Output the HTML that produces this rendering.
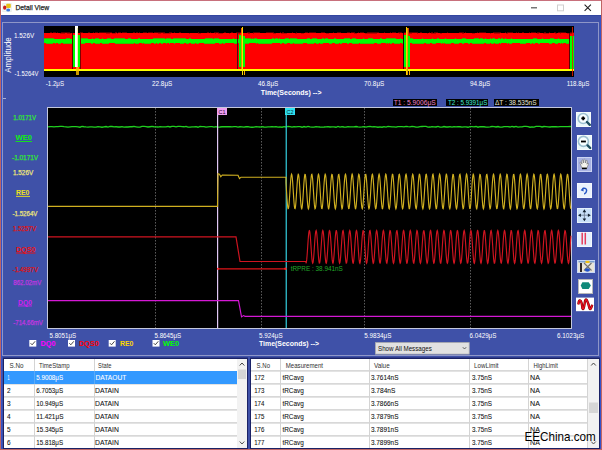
<!DOCTYPE html><html><head><meta charset="utf-8"><style>html,body{margin:0;padding:0;width:602px;height:450px;overflow:hidden;background:#3f51a8}</style></head><body><svg width="602" height="450" viewBox="0 0 602 450" style="position:absolute;left:0;top:0;font-family:'Liberation Sans',sans-serif" shape-rendering="auto">
<rect x="0" y="0" width="602" height="450" fill="#3f51a8" />
<rect x="1" y="1" width="600" height="14" fill="#ffffff" />
<rect x="1" y="15" width="600" height="1" fill="#3346a0" />
<rect x="0" y="0" width="602" height="1" fill="#c8707c" />
<rect x="0" y="449" width="602" height="1" fill="#c06868" />
<rect x="0" y="0" width="1" height="450" fill="#bf6464" />
<rect x="601" y="0" width="1" height="450" fill="#bf6464" />
<rect x="1" y="16" width="1" height="433" fill="#3552c8" />
<rect x="600" y="16" width="1" height="433" fill="#3552c8" />
<rect x="2.8" y="3.4" width="8.4" height="8.4" fill="#f4f8f4" stroke="#dde4dd" stroke-width="0.5"/>
<ellipse cx="8.2" cy="9.9" rx="2" ry="1.5" fill="#3a78e0"/>
<rect x="6.2" y="3.8" width="4.6" height="4.1" rx="1" fill="#e8c018"/>
<ellipse cx="4.7" cy="7.7" rx="1.7" ry="2.1" fill="#c82020"/>
<text x="15.40" y="10.2" font-size="7.6" fill="#222" font-weight="normal" textLength="33.67" lengthAdjust="spacingAndGlyphs" stroke="#222" stroke-width="0.25">Detail View</text>
<rect x="531" y="7.2" width="6" height="1.2" fill="#555" />
<rect x="557.5" y="5" width="6" height="5.8" fill="none" stroke="#cfcfcf" stroke-width="1"/>
<path d="M584.6 4.6 L590.9 10.9 M590.9 4.6 L584.6 10.9" stroke="#222" stroke-width="1.1"/>
<rect x="2" y="22" width="597" height="1" fill="#8e96c8" />
<rect x="2" y="22" width="1" height="334" fill="#8e96c8" />
<rect x="598" y="22" width="1" height="334" fill="#8e96c8" />
<rect x="2" y="355" width="597" height="1" fill="#8e96c8" />
<rect x="3" y="98" width="3" height="1" fill="#a8b0d8" />
<rect x="44" y="26" width="530" height="51" fill="#000" />
<rect x="44" y="33" width="530" height="36" fill="#ff0000" />
<path d="M50 32h2v1h-2zM53 32h3v1h-3zM57 32h1v1h-1zM61 32h9v1h-9zM75 32h1v1h-1zM80 32h3v1h-3zM88 32h2v1h-2zM93 32h1v1h-1zM95 32h3v1h-3zM99 32h4v1h-4zM103 32h4v1h-4zM107 32h1v1h-1zM108 32h4v1h-4zM115 32h2v1h-2zM118 32h1v1h-1zM119 32h2v1h-2zM122 32h5v1h-5zM133 32h2v1h-2zM136 32h2v1h-2zM139 32h1v1h-1zM143 32h2v1h-2zM145 32h1v1h-1zM146 32h1v1h-1zM148 32h2v1h-2zM150 32h3v1h-3zM154 32h1v1h-1zM155 32h10v1h-10zM169 32h3v1h-3zM174 32h1v1h-1zM179 32h2v1h-2zM198 32h1v1h-1zM207 32h1v1h-1zM208 32h1v1h-1zM210 32h1v1h-1zM214 32h3v1h-3zM217 32h2v1h-2zM224 32h2v1h-2zM231 32h2v1h-2zM236 32h6v1h-6zM247 32h2v1h-2zM249 32h1v1h-1zM253 32h4v1h-4zM257 32h3v1h-3zM266 32h5v1h-5zM271 32h3v1h-3zM280 32h1v1h-1zM282 32h2v1h-2zM292 32h1v1h-1zM296 32h1v1h-1zM305 32h3v1h-3zM309 32h1v1h-1zM310 32h1v1h-1zM311 32h2v1h-2zM313 32h3v1h-3zM321 32h4v1h-4zM333 32h1v1h-1zM337 32h3v1h-3zM340 32h1v1h-1zM347 32h3v1h-3zM351 32h4v1h-4zM358 32h1v1h-1zM360 32h1v1h-1zM361 32h3v1h-3zM367 32h1v1h-1zM368 32h11v1h-11zM384 32h1v1h-1zM390 32h1v1h-1zM392 32h2v1h-2zM394 32h2v1h-2zM398 32h2v1h-2zM400 32h2v1h-2zM404 32h2v1h-2zM408 32h10v1h-10zM420 32h2v1h-2zM429 32h1v1h-1zM431 32h2v1h-2zM434 32h4v1h-4zM447 32h1v1h-1zM459 32h5v1h-5zM465 32h1v1h-1zM477 32h1v1h-1zM479 32h7v1h-7zM493 32h2v1h-2zM495 32h1v1h-1zM496 32h4v1h-4zM500 32h1v1h-1zM505 32h1v1h-1zM507 32h1v1h-1zM508 32h5v1h-5zM516 32h1v1h-1zM518 32h1v1h-1zM522 32h2v1h-2zM529 32h1v1h-1zM531 32h5v1h-5zM537 32h3v1h-3zM544 32h2v1h-2zM549 32h1v1h-1zM554 32h2v1h-2zM558 32h4v1h-4zM562 32h4v1h-4zM570 32h2v1h-2zM573 32h1v1h-1z" fill="#ff0000" opacity="0.35" shape-rendering="crispEdges"/>
<path d="M60 33h1v1h-1zM61 33h4v1h-4zM67 33h2v1h-2zM69 33h2v1h-2zM106 33h4v1h-4zM112 33h2v1h-2zM114 33h2v1h-2zM117 33h1v1h-1zM158 33h3v1h-3zM163 33h3v1h-3zM166 33h5v1h-5zM189 33h1v1h-1zM198 33h3v1h-3zM215 33h1v1h-1zM218 33h2v1h-2zM220 33h3v1h-3zM229 33h1v1h-1zM237 33h3v1h-3zM248 33h2v1h-2zM253 33h1v1h-1zM273 33h3v1h-3zM281 33h6v1h-6zM295 33h2v1h-2zM301 33h3v1h-3zM326 33h3v1h-3zM354 33h3v1h-3zM365 33h11v1h-11zM376 33h1v1h-1zM399 33h1v1h-1zM406 33h6v1h-6zM417 33h1v1h-1zM427 33h1v1h-1zM431 33h5v1h-5zM440 33h2v1h-2zM462 33h2v1h-2zM472 33h3v1h-3zM490 33h1v1h-1zM494 33h4v1h-4zM498 33h2v1h-2zM506 33h2v1h-2zM537 33h2v1h-2zM543 33h5v1h-5zM548 33h1v1h-1zM555 33h2v1h-2zM560 33h1v1h-1zM567 33h4v1h-4zM571 33h2v1h-2z" fill="#000000" opacity="0.25" shape-rendering="crispEdges"/>
<rect x="44" y="39" width="530" height="4" fill="#00ff00" />
<path d="M44 38h2v1h-2zM46 38h2v1h-2zM48 38h6v1h-6zM66 38h2v1h-2zM68 38h2v1h-2zM80 38h8v1h-8zM92 38h1v1h-1zM95 38h4v1h-4zM102 38h1v1h-1zM107 38h4v1h-4zM114 38h11v1h-11zM128 38h3v1h-3zM138 38h2v1h-2zM153 38h12v1h-12zM166 38h5v1h-5zM173 38h13v1h-13zM189 38h2v1h-2zM205 38h5v1h-5zM210 38h3v1h-3zM214 38h5v1h-5zM233 38h1v1h-1zM243 38h6v1h-6zM249 38h2v1h-2zM252 38h1v1h-1zM254 38h3v1h-3zM272 38h2v1h-2zM275 38h3v1h-3zM279 38h1v1h-1zM285 38h1v1h-1zM286 38h3v1h-3zM290 38h7v1h-7zM307 38h3v1h-3zM312 38h5v1h-5zM322 38h2v1h-2zM325 38h3v1h-3zM334 38h2v1h-2zM344 38h6v1h-6zM352 38h2v1h-2zM354 38h2v1h-2zM363 38h1v1h-1zM368 38h5v1h-5zM380 38h2v1h-2zM386 38h10v1h-10zM400 38h1v1h-1zM406 38h2v1h-2zM410 38h2v1h-2zM412 38h1v1h-1zM422 38h1v1h-1zM432 38h1v1h-1zM437 38h2v1h-2zM445 38h1v1h-1zM455 38h1v1h-1zM462 38h2v1h-2zM464 38h2v1h-2zM474 38h5v1h-5zM480 38h3v1h-3zM485 38h1v1h-1zM490 38h1v1h-1zM492 38h3v1h-3zM498 38h2v1h-2zM501 38h2v1h-2zM505 38h1v1h-1zM511 38h1v1h-1zM533 38h4v1h-4zM542 38h1v1h-1zM550 38h1v1h-1zM551 38h3v1h-3zM558 38h1v1h-1zM573 38h1v1h-1z" fill="#00f000" opacity="0.7" shape-rendering="crispEdges"/>
<path d="M46 43h1v1h-1zM47 43h4v1h-4zM51 43h2v1h-2zM55 43h1v1h-1zM58 43h3v1h-3zM63 43h5v1h-5zM68 43h8v1h-8zM76 43h7v1h-7zM83 43h1v1h-1zM84 43h1v1h-1zM91 43h2v1h-2zM95 43h5v1h-5zM102 43h5v1h-5zM107 43h2v1h-2zM115 43h1v1h-1zM116 43h8v1h-8zM124 43h10v1h-10zM135 43h2v1h-2zM137 43h2v1h-2zM142 43h1v1h-1zM144 43h3v1h-3zM147 43h4v1h-4zM154 43h1v1h-1zM155 43h1v1h-1zM157 43h2v1h-2zM161 43h1v1h-1zM162 43h1v1h-1zM166 43h1v1h-1zM169 43h1v1h-1zM174 43h1v1h-1zM180 43h2v1h-2zM182 43h2v1h-2zM186 43h3v1h-3zM191 43h3v1h-3zM194 43h1v1h-1zM196 43h3v1h-3zM204 43h1v1h-1zM205 43h10v1h-10zM219 43h1v1h-1zM220 43h2v1h-2zM223 43h2v1h-2zM234 43h1v1h-1zM235 43h2v1h-2zM237 43h1v1h-1zM240 43h2v1h-2zM244 43h1v1h-1zM245 43h3v1h-3zM248 43h1v1h-1zM256 43h1v1h-1zM258 43h13v1h-13zM271 43h1v1h-1zM280 43h2v1h-2zM284 43h3v1h-3zM290 43h2v1h-2zM292 43h1v1h-1zM294 43h1v1h-1zM295 43h3v1h-3zM298 43h1v1h-1zM299 43h1v1h-1zM300 43h3v1h-3zM307 43h7v1h-7zM316 43h3v1h-3zM320 43h3v1h-3zM329 43h3v1h-3zM335 43h2v1h-2zM337 43h2v1h-2zM340 43h2v1h-2zM347 43h2v1h-2zM352 43h3v1h-3zM355 43h4v1h-4zM360 43h1v1h-1zM361 43h4v1h-4zM365 43h2v1h-2zM367 43h3v1h-3zM370 43h4v1h-4zM377 43h1v1h-1zM378 43h3v1h-3zM386 43h1v1h-1zM388 43h1v1h-1zM390 43h2v1h-2zM394 43h4v1h-4zM398 43h2v1h-2zM402 43h1v1h-1zM403 43h1v1h-1zM405 43h2v1h-2zM412 43h2v1h-2zM414 43h10v1h-10zM426 43h4v1h-4zM432 43h4v1h-4zM441 43h1v1h-1zM443 43h1v1h-1zM445 43h3v1h-3zM448 43h3v1h-3zM454 43h5v1h-5zM462 43h2v1h-2zM468 43h1v1h-1zM469 43h1v1h-1zM472 43h2v1h-2zM474 43h2v1h-2zM476 43h3v1h-3zM479 43h2v1h-2zM481 43h3v1h-3zM486 43h4v1h-4zM491 43h3v1h-3zM495 43h3v1h-3zM498 43h1v1h-1zM500 43h1v1h-1zM507 43h1v1h-1zM509 43h3v1h-3zM520 43h1v1h-1zM521 43h2v1h-2zM523 43h3v1h-3zM530 43h1v1h-1zM531 43h1v1h-1zM533 43h2v1h-2zM538 43h1v1h-1zM539 43h1v1h-1zM549 43h2v1h-2zM551 43h1v1h-1zM555 43h3v1h-3zM560 43h1v1h-1zM562 43h1v1h-1zM566 43h5v1h-5z" fill="#00f000" opacity="0.8" shape-rendering="crispEdges"/>
<rect x="44" y="69" width="530" height="2" fill="#ffff00" />
<rect x="72" y="33" width="1" height="36" fill="#600000" />
<rect x="73" y="35" width="2" height="32" fill="#00ff00" />
<rect x="75" y="26" width="3" height="41" fill="#ffffff" />
<rect x="77" y="28" width="1" height="39" fill="#f0f0a0" />
<rect x="78" y="35" width="2" height="32" fill="#00ff00" />
<rect x="80" y="33" width="1" height="36" fill="#800000" />
<rect x="76" y="67" width="3" height="8" fill="#ffc000" opacity="0.8"/>
<rect x="237" y="33" width="1" height="36" fill="#401020" />
<rect x="239" y="35" width="2" height="32" fill="#00ff00" />
<rect x="241" y="33" width="1" height="36" fill="#c8a000" />
<rect x="242" y="27" width="1" height="48" fill="#ffe000" />
<rect x="243" y="36" width="2" height="31" fill="#00ff00" />
<rect x="241" y="28" width="1" height="8" fill="#ff6000" />
<rect x="244" y="71" width="1" height="4" fill="#ffb000" />
<rect x="403" y="33" width="1" height="36" fill="#300010" />
<rect x="404" y="35" width="2" height="32" fill="#00ff00" />
<rect x="406" y="27" width="1" height="48" fill="#ffd000" />
<rect x="407" y="28" width="1" height="47" fill="#e0a000" />
<rect x="408" y="36" width="2" height="31" fill="#00ff00" />
<rect x="408" y="28" width="1" height="8" fill="#d04000" />
<rect x="409" y="71" width="1" height="4" fill="#ffb000" />
<rect x="569" y="33" width="1" height="36" fill="#600000" />
<rect x="570" y="36" width="4" height="33" fill="#00ff00" />
<rect x="572" y="27" width="1" height="49" fill="#e81800" opacity="0.85"/>
<text x="14.00" y="38.2" font-size="7" fill="#fff" font-weight="normal" textLength="20.17" lengthAdjust="spacingAndGlyphs" >1.526V</text>
<text x="14.50" y="76" font-size="7" fill="#fff" font-weight="normal" textLength="24.01" lengthAdjust="spacingAndGlyphs" >-1.5264V</text>
<text x="0" y="0" font-size="9.6" fill="#fff" textLength="35.6" lengthAdjust="spacingAndGlyphs" transform="translate(11.4,72.8) rotate(-90)">Amplitude</text>
<text x="45.80" y="86.3" font-size="7" fill="#fff" font-weight="normal" textLength="18.19" lengthAdjust="spacingAndGlyphs" >-1.2μS</text>
<text x="152.00" y="86.3" font-size="7" fill="#fff" font-weight="normal" textLength="20.30" lengthAdjust="spacingAndGlyphs" >22.8μS</text>
<text x="258.00" y="86.3" font-size="7" fill="#fff" font-weight="normal" textLength="20.30" lengthAdjust="spacingAndGlyphs" >46.8μS</text>
<text x="364.00" y="86.3" font-size="7" fill="#fff" font-weight="normal" textLength="20.30" lengthAdjust="spacingAndGlyphs" >70.8μS</text>
<text x="470.00" y="86.3" font-size="7" fill="#fff" font-weight="normal" textLength="20.30" lengthAdjust="spacingAndGlyphs" >94.8μS</text>
<text x="566.70" y="86.3" font-size="7" fill="#fff" font-weight="normal" textLength="22.64" lengthAdjust="spacingAndGlyphs" >118.8μS</text>
<text x="260.80" y="94.6" font-size="7.4" fill="#fff" font-weight="bold" textLength="60.73" lengthAdjust="spacingAndGlyphs" >Time(Seconds) --&gt;</text>
<rect x="393" y="99" width="44" height="7" fill="#000" />
<text x="393.75" y="105" font-size="6.8" fill="#f080c8" font-weight="normal" textLength="41.90" lengthAdjust="spacingAndGlyphs" >T1 : 5.9006μS</text>
<rect x="446" y="99" width="42" height="7" fill="#000" />
<text x="447.90" y="105" font-size="6.8" fill="#40e8d0" font-weight="normal" textLength="39.46" lengthAdjust="spacingAndGlyphs" >T2 : 5.9391μS</text>
<rect x="494" y="99" width="45" height="7" fill="#000" />
<text x="495.00" y="105" font-size="6.8" fill="#e8e8d8" font-weight="normal" textLength="41.58" lengthAdjust="spacingAndGlyphs" >ΔT : 38.535nS</text>
<rect x="47" y="107" width="525" height="222" fill="#c4c8dc" />
<rect x="48" y="108" width="523" height="220" fill="#000" />
<line x1="155.5" y1="108" x2="155.5" y2="328" stroke="#5c5c5c" stroke-width="1" stroke-dasharray="1.5 1.5"/>
<line x1="261.5" y1="108" x2="261.5" y2="328" stroke="#5c5c5c" stroke-width="1" stroke-dasharray="1.5 1.5"/>
<line x1="364.5" y1="108" x2="364.5" y2="328" stroke="#5c5c5c" stroke-width="1" stroke-dasharray="1.5 1.5"/>
<line x1="470.5" y1="108" x2="470.5" y2="328" stroke="#5c5c5c" stroke-width="1" stroke-dasharray="1.5 1.5"/>
<path d="M48 126.8 L50.0 126.57 L52.0 126.53 L54.0 126.87 L56.0 126.57 L58.0 126.64 L60.0 126.41 L62.0 126.40 L64.0 126.67 L66.0 126.82 L68.0 127.20 L70.0 126.93 L72.0 126.72 L74.0 126.72 L76.0 126.56 L78.0 126.78 L80.0 127.21 L82.0 126.46 L84.0 126.74 L86.0 126.97 L88.0 127.04 L90.0 126.85 L92.0 126.93 L94.0 127.19 L96.0 127.16 L98.0 126.58 L100.0 126.84 L102.0 127.25 L104.0 126.82 L106.0 126.52 L108.0 127.04 L110.0 126.40 L112.0 126.49 L114.0 126.85 L116.0 126.60 L118.0 127.00 L120.0 127.00 L122.0 126.64 L124.0 127.04 L126.0 126.93 L128.0 126.99 L130.0 126.76 L132.0 126.74 L134.0 126.45 L136.0 126.78 L138.0 127.21 L140.0 127.15 L142.0 126.40 L144.0 126.41 L146.0 126.59 L148.0 126.98 L150.0 126.74 L152.0 126.47 L154.0 126.73 L156.0 126.87 L158.0 127.02 L160.0 126.71 L162.0 126.93 L164.0 126.96 L166.0 126.90 L168.0 126.39 L170.0 126.99 L172.0 126.47 L174.0 126.40 L176.0 126.78 L178.0 126.37 L180.0 126.42 L182.0 126.70 L184.0 126.77 L186.0 126.45 L188.0 127.21 L190.0 127.12 L192.0 126.79 L194.0 126.88 L196.0 126.63 L198.0 127.24 L200.0 126.46 L202.0 126.62 L204.0 126.55 L206.0 127.13 L208.0 126.81 L210.0 126.72 L212.0 126.71 L214.0 127.15 L216.0 126.58 L218.0 127.06 L220.0 126.99 L222.0 126.75 L224.0 126.68 L226.0 126.74 L228.0 126.76 L230.0 126.63 L232.0 126.91 L234.0 126.72 L236.0 126.62 L238.0 127.05 L240.0 126.76 L242.0 126.78 L244.0 127.14 L246.0 126.76 L248.0 126.69 L250.0 127.16 L252.0 127.23 L254.0 127.06 L256.0 126.71 L258.0 126.95 L260.0 127.02 L262.0 126.62 L264.0 127.00 L266.0 127.20 L268.0 126.94 L270.0 126.95 L272.0 126.74 L274.0 126.94 L276.0 126.55 L278.0 127.04 L280.0 126.84 L282.0 127.23 L284.0 126.66 L286.0 126.99 L288.0 126.37 L290.0 126.72 L292.0 127.04 L294.0 126.58 L296.0 126.90 L298.0 126.55 L300.0 126.71 L302.0 127.24 L304.0 126.53 L306.0 127.17 L308.0 126.40 L310.0 126.87 L312.0 127.09 L314.0 127.10 L316.0 126.70 L318.0 126.88 L320.0 126.99 L322.0 127.04 L324.0 127.02 L326.0 126.87 L328.0 126.58 L330.0 126.98 L332.0 126.86 L334.0 126.84 L336.0 127.24 L338.0 126.47 L340.0 127.05 L342.0 126.64 L344.0 127.00 L346.0 127.21 L348.0 126.60 L350.0 126.86 L352.0 126.83 L354.0 126.80 L356.0 126.50 L358.0 126.91 L360.0 127.15 L362.0 126.95 L364.0 126.61 L366.0 127.08 L368.0 126.73 L370.0 126.48 L372.0 126.90 L374.0 126.76 L376.0 126.83 L378.0 127.24 L380.0 126.86 L382.0 127.21 L384.0 126.67 L386.0 127.03 L388.0 126.42 L390.0 126.62 L392.0 126.97 L394.0 126.97 L396.0 127.10 L398.0 126.69 L400.0 126.60 L402.0 126.67 L404.0 126.83 L406.0 126.37 L408.0 126.69 L410.0 126.94 L412.0 126.48 L414.0 126.63 L416.0 127.14 L418.0 127.19 L420.0 126.57 L422.0 126.51 L424.0 126.46 L426.0 126.43 L428.0 127.06 L430.0 127.02 L432.0 126.59 L434.0 126.79 L436.0 126.98 L438.0 126.38 L440.0 127.09 L442.0 127.12 L444.0 126.54 L446.0 126.98 L448.0 126.98 L450.0 126.65 L452.0 127.14 L454.0 126.55 L456.0 126.78 L458.0 126.63 L460.0 126.75 L462.0 127.08 L464.0 126.86 L466.0 126.90 L468.0 127.24 L470.0 126.55 L472.0 126.55 L474.0 126.91 L476.0 126.49 L478.0 127.22 L480.0 126.66 L482.0 126.75 L484.0 126.74 L486.0 127.09 L488.0 127.17 L490.0 126.96 L492.0 126.50 L494.0 126.67 L496.0 126.99 L498.0 126.54 L500.0 127.14 L502.0 127.14 L504.0 126.55 L506.0 126.68 L508.0 126.56 L510.0 127.00 L512.0 126.39 L514.0 126.98 L516.0 126.41 L518.0 127.11 L520.0 126.84 L522.0 126.87 L524.0 126.44 L526.0 126.39 L528.0 126.67 L530.0 127.24 L532.0 126.89 L534.0 127.13 L536.0 126.41 L538.0 126.44 L540.0 126.37 L542.0 126.98 L544.0 126.51 L546.0 126.60 L548.0 126.95 L550.0 126.98 L552.0 126.64 L554.0 126.77 L556.0 126.61 L558.0 126.86 L560.0 126.67 L562.0 126.67 L564.0 126.57 L566.0 126.61 L568.0 126.58 L570.0 126.36 L571.0 126.63 " fill="none" stroke="#20d020" stroke-width="1.3"/>
<rect x="217" y="108" width="1.2" height="220" fill="#e0c8f4" />
<rect x="285.6" y="108" width="1.3" height="220" fill="#30c0d0" />
<rect x="217" y="108" width="10" height="7" fill="#f0a0f0" />
<rect x="285" y="108" width="10" height="7" fill="#30e0f0" />
<text x="222" y="114" font-size="5.5" fill="#303" text-anchor="middle">C1</text>
<text x="290" y="114" font-size="5.5" fill="#033" text-anchor="middle">C2</text>
<path d="M48 206.4 L217.5 206.4 L218 173.8 L219.5 174.2 L220.8 176.8 L222.3 175 L238 175.2 L239.5 178.6 L241 177.2 L286 177.2 L286.00 182.97 L286.35 188.25 L286.70 193.87 L287.05 199.25 L287.40 203.80 L287.75 207.06 L288.10 208.66 L288.45 208.45 L288.80 206.45 L289.15 202.86 L289.50 198.07 L289.85 192.59 L290.20 186.99 L290.55 181.87 L290.90 177.76 L291.25 175.12 L291.60 174.20 L291.95 175.12 L292.30 177.76 L292.65 181.87 L293.00 186.99 L293.35 192.59 L293.70 198.07 L294.05 202.86 L294.40 206.45 L294.75 208.45 L295.10 208.66 L295.45 207.06 L295.80 203.80 L296.15 199.25 L296.50 193.87 L296.85 188.25 L297.20 182.97 L297.55 178.59 L297.90 175.58 L298.25 174.25 L298.60 174.75 L298.95 177.02 L299.30 180.82 L299.65 185.76 L300.00 191.30 L300.35 196.86 L300.70 201.86 L301.05 205.76 L301.40 208.15 L301.75 208.78 L302.10 207.58 L302.45 204.68 L302.80 200.38 L303.15 195.15 L303.50 189.53 L303.85 184.11 L304.20 179.48 L304.55 176.12 L304.90 174.39 L305.25 174.47 L305.60 176.35 L305.95 179.84 L306.30 184.55 L306.65 190.01 L307.00 195.62 L307.35 200.79 L307.70 204.99 L308.05 207.75 L308.40 208.80 L308.75 208.01 L309.10 205.48 L309.45 201.47 L309.80 196.40 L310.15 190.81 L310.50 185.30 L310.85 180.45 L311.20 176.76 L311.55 174.63 L311.90 174.29 L312.25 175.77 L312.60 178.92 L312.95 183.39 L313.30 188.73 L313.65 194.35 L314.00 199.68 L314.35 204.14 L314.70 207.26 L315.05 208.72 L315.40 208.35 L315.75 206.20 L316.10 202.49 L316.45 197.62 L316.80 192.11 L317.15 186.52 L317.50 181.47 L317.85 177.48 L318.20 174.97 L318.55 174.21 L318.90 175.28 L319.25 178.06 L319.60 182.27 L319.95 187.46 L320.30 193.07 L320.65 198.52 L321.00 203.22 L321.35 206.69 L321.70 208.54 L322.05 208.60 L322.40 206.84 L322.75 203.46 L323.10 198.81 L323.45 193.39 L323.80 187.77 L324.15 182.55 L324.50 178.27 L324.85 175.39 L325.20 174.22 L325.55 174.87 L325.90 177.29 L326.25 181.21 L326.60 186.22 L326.95 191.78 L327.30 197.32 L327.65 202.24 L328.00 206.03 L328.35 208.27 L328.70 208.75 L329.05 207.39 L329.40 204.36 L329.75 199.96 L330.10 194.67 L330.45 189.05 L330.80 183.68 L331.15 179.14 L331.50 175.91 L331.85 174.33 L332.20 174.56 L332.55 176.59 L332.90 180.20 L333.25 185.00 L333.60 190.49 L333.95 196.09 L334.30 201.20 L334.65 205.28 L335.00 207.91 L335.35 208.80 L335.70 207.86 L336.05 205.19 L336.40 201.07 L336.75 195.93 L337.10 190.33 L337.45 184.85 L337.80 180.08 L338.15 176.51 L338.50 174.53 L338.85 174.35 L339.20 175.98 L339.55 179.25 L339.90 183.82 L340.25 189.21 L340.60 194.83 L340.95 200.10 L341.30 204.47 L341.65 207.46 L342.00 208.76 L342.35 208.23 L342.70 205.94 L343.05 202.11 L343.40 197.17 L343.75 191.62 L344.10 186.06 L344.45 181.08 L344.80 177.20 L345.15 174.83 L345.50 174.23 L345.85 175.45 L346.20 178.38 L346.55 182.69 L346.90 187.93 L347.25 193.55 L347.60 198.96 L347.95 203.57 L348.30 206.91 L348.65 208.62 L349.00 208.51 L349.35 206.61 L349.70 203.10 L350.05 198.37 L350.40 192.91 L350.75 187.30 L351.10 182.14 L351.45 177.96 L351.80 175.22 L352.15 174.20 L352.50 175.01 L352.85 177.57 L353.20 181.60 L353.55 186.68 L353.90 192.27 L354.25 197.77 L354.60 202.62 L354.95 206.28 L355.30 208.39 L355.65 208.70 L356.00 207.20 L356.35 204.03 L356.70 199.54 L357.05 194.19 L357.40 188.57 L357.75 183.25 L358.10 178.81 L358.45 175.70 L358.80 174.28 L359.15 174.67 L359.50 176.84 L359.85 180.57 L360.20 185.45 L360.55 190.98 L360.90 196.55 L361.25 201.60 L361.60 205.57 L361.95 208.06 L362.30 208.79 L362.65 207.69 L363.00 204.88 L363.35 200.66 L363.70 195.46 L364.05 189.85 L364.40 184.41 L364.75 179.72 L365.10 176.28 L365.45 174.44 L365.80 174.42 L366.15 176.20 L366.50 179.60 L366.85 184.26 L367.20 189.69 L367.55 195.30 L367.90 200.52 L368.25 204.78 L368.60 207.64 L368.95 208.78 L369.30 208.10 L369.65 205.66 L370.00 201.73 L370.35 196.71 L370.70 191.14 L371.05 185.60 L371.40 180.70 L371.75 176.93 L372.10 174.71 L372.45 174.26 L372.80 175.64 L373.15 178.70 L373.50 183.11 L373.85 188.41 L374.20 194.03 L374.55 199.39 L374.90 203.92 L375.25 207.13 L375.60 208.68 L375.95 208.42 L376.30 206.37 L376.65 202.74 L377.00 197.92 L377.35 192.43 L377.70 186.83 L378.05 181.73 L378.40 177.67 L378.75 175.06 L379.10 174.20 L379.45 175.17 L379.80 177.86 L380.15 182.00 L380.50 187.15 L380.85 192.75 L381.20 198.22 L381.55 202.98 L381.90 206.53 L382.25 208.48 L382.60 208.64 L382.95 206.99 L383.30 203.69 L383.65 199.10 L384.00 193.71 L384.35 188.09 L384.70 182.83 L385.05 178.48 L385.40 175.51 L385.75 174.24 L386.10 174.79 L386.45 177.11 L386.80 180.95 L387.15 185.91 L387.50 191.46 L387.85 197.01 L388.20 201.99 L388.55 205.85 L388.90 208.19 L389.25 208.77 L389.60 207.52 L389.95 204.57 L390.30 200.24 L390.65 194.99 L391.00 189.37 L391.35 183.97 L391.70 179.37 L392.05 176.05 L392.40 174.37 L392.75 174.50 L393.10 176.43 L393.45 179.96 L393.80 184.70 L394.15 190.17 L394.50 195.78 L394.85 200.93 L395.20 205.09 L395.55 207.81 L395.90 208.80 L396.25 207.96 L396.60 205.38 L396.95 201.33 L397.30 196.24 L397.65 190.65 L398.00 185.15 L398.35 180.32 L398.70 176.67 L399.05 174.60 L399.40 174.31 L399.75 175.84 L400.10 179.03 L400.45 183.53 L400.80 188.89 L401.15 194.51 L401.50 199.82 L401.85 204.25 L402.20 207.33 L402.55 208.73 L402.90 208.31 L403.25 206.11 L403.60 202.37 L403.95 197.47 L404.30 191.94 L404.65 186.37 L405.00 181.34 L405.35 177.38 L405.70 174.92 L406.05 174.21 L406.40 175.33 L406.75 178.17 L407.10 182.41 L407.45 187.62 L407.80 193.23 L408.15 198.67 L408.50 203.34 L408.85 206.76 L409.20 208.57 L409.55 208.57 L409.90 206.76 L410.25 203.34 L410.60 198.67 L410.95 193.23 L411.30 187.62 L411.65 182.41 L412.00 178.17 L412.35 175.33 L412.70 174.21 L413.05 174.92 L413.40 177.38 L413.75 181.34 L414.10 186.37 L414.45 191.94 L414.80 197.47 L415.15 202.37 L415.50 206.11 L415.85 208.31 L416.20 208.73 L416.55 207.33 L416.90 204.25 L417.25 199.82 L417.60 194.51 L417.95 188.89 L418.30 183.53 L418.65 179.03 L419.00 175.84 L419.35 174.31 L419.70 174.60 L420.05 176.67 L420.40 180.32 L420.75 185.15 L421.10 190.65 L421.45 196.24 L421.80 201.33 L422.15 205.38 L422.50 207.96 L422.85 208.80 L423.20 207.81 L423.55 205.09 L423.90 200.93 L424.25 195.78 L424.60 190.17 L424.95 184.70 L425.30 179.96 L425.65 176.43 L426.00 174.50 L426.35 174.37 L426.70 176.05 L427.05 179.37 L427.40 183.97 L427.75 189.37 L428.10 194.99 L428.45 200.24 L428.80 204.57 L429.15 207.52 L429.50 208.77 L429.85 208.19 L430.20 205.85 L430.55 201.99 L430.90 197.01 L431.25 191.46 L431.60 185.91 L431.95 180.95 L432.30 177.11 L432.65 174.79 L433.00 174.24 L433.35 175.51 L433.70 178.48 L434.05 182.83 L434.40 188.09 L434.75 193.71 L435.10 199.10 L435.45 203.69 L435.80 206.99 L436.15 208.64 L436.50 208.48 L436.85 206.53 L437.20 202.98 L437.55 198.22 L437.90 192.75 L438.25 187.15 L438.60 182.00 L438.95 177.86 L439.30 175.17 L439.65 174.20 L440.00 175.06 L440.35 177.67 L440.70 181.73 L441.05 186.83 L441.40 192.43 L441.75 197.92 L442.10 202.74 L442.45 206.37 L442.80 208.42 L443.15 208.68 L443.50 207.13 L443.85 203.92 L444.20 199.39 L444.55 194.03 L444.90 188.41 L445.25 183.11 L445.60 178.70 L445.95 175.64 L446.30 174.26 L446.65 174.71 L447.00 176.93 L447.35 180.70 L447.70 185.60 L448.05 191.14 L448.40 196.71 L448.75 201.73 L449.10 205.66 L449.45 208.10 L449.80 208.78 L450.15 207.64 L450.50 204.78 L450.85 200.52 L451.20 195.30 L451.55 189.69 L451.90 184.26 L452.25 179.60 L452.60 176.20 L452.95 174.42 L453.30 174.44 L453.65 176.28 L454.00 179.72 L454.35 184.41 L454.70 189.85 L455.05 195.46 L455.40 200.66 L455.75 204.88 L456.10 207.69 L456.45 208.79 L456.80 208.06 L457.15 205.57 L457.50 201.60 L457.85 196.55 L458.20 190.98 L458.55 185.45 L458.90 180.57 L459.25 176.84 L459.60 174.67 L459.95 174.28 L460.30 175.70 L460.65 178.81 L461.00 183.25 L461.35 188.57 L461.70 194.19 L462.05 199.54 L462.40 204.03 L462.75 207.20 L463.10 208.70 L463.45 208.39 L463.80 206.28 L464.15 202.62 L464.50 197.77 L464.85 192.27 L465.20 186.68 L465.55 181.60 L465.90 177.57 L466.25 175.01 L466.60 174.20 L466.95 175.22 L467.30 177.96 L467.65 182.14 L468.00 187.30 L468.35 192.91 L468.70 198.37 L469.05 203.10 L469.40 206.61 L469.75 208.51 L470.10 208.62 L470.45 206.91 L470.80 203.57 L471.15 198.96 L471.50 193.55 L471.85 187.93 L472.20 182.69 L472.55 178.38 L472.90 175.45 L473.25 174.23 L473.60 174.83 L473.95 177.20 L474.30 181.08 L474.65 186.06 L475.00 191.62 L475.35 197.17 L475.70 202.11 L476.05 205.94 L476.40 208.23 L476.75 208.76 L477.10 207.46 L477.45 204.47 L477.80 200.10 L478.15 194.83 L478.50 189.21 L478.85 183.82 L479.20 179.25 L479.55 175.98 L479.90 174.35 L480.25 174.53 L480.60 176.51 L480.95 180.08 L481.30 184.85 L481.65 190.33 L482.00 195.93 L482.35 201.07 L482.70 205.19 L483.05 207.86 L483.40 208.80 L483.75 207.91 L484.10 205.28 L484.45 201.20 L484.80 196.09 L485.15 190.49 L485.50 185.00 L485.85 180.20 L486.20 176.59 L486.55 174.56 L486.90 174.33 L487.25 175.91 L487.60 179.14 L487.95 183.68 L488.30 189.05 L488.65 194.67 L489.00 199.96 L489.35 204.36 L489.70 207.39 L490.05 208.75 L490.40 208.27 L490.75 206.03 L491.10 202.24 L491.45 197.32 L491.80 191.78 L492.15 186.22 L492.50 181.21 L492.85 177.29 L493.20 174.87 L493.55 174.22 L493.90 175.39 L494.25 178.27 L494.60 182.55 L494.95 187.77 L495.30 193.39 L495.65 198.81 L496.00 203.46 L496.35 206.84 L496.70 208.60 L497.05 208.54 L497.40 206.69 L497.75 203.22 L498.10 198.52 L498.45 193.07 L498.80 187.46 L499.15 182.27 L499.50 178.06 L499.85 175.28 L500.20 174.21 L500.55 174.97 L500.90 177.48 L501.25 181.47 L501.60 186.52 L501.95 192.11 L502.30 197.62 L502.65 202.49 L503.00 206.20 L503.35 208.35 L503.70 208.72 L504.05 207.26 L504.40 204.14 L504.75 199.68 L505.10 194.35 L505.45 188.73 L505.80 183.39 L506.15 178.92 L506.50 175.77 L506.85 174.29 L507.20 174.63 L507.55 176.76 L507.90 180.45 L508.25 185.30 L508.60 190.81 L508.95 196.40 L509.30 201.47 L509.65 205.48 L510.00 208.01 L510.35 208.80 L510.70 207.75 L511.05 204.99 L511.40 200.79 L511.75 195.62 L512.10 190.01 L512.45 184.55 L512.80 179.84 L513.15 176.35 L513.50 174.47 L513.85 174.39 L514.20 176.12 L514.55 179.48 L514.90 184.11 L515.25 189.53 L515.60 195.15 L515.95 200.38 L516.30 204.68 L516.65 207.58 L517.00 208.78 L517.35 208.15 L517.70 205.76 L518.05 201.86 L518.40 196.86 L518.75 191.30 L519.10 185.76 L519.45 180.82 L519.80 177.02 L520.15 174.75 L520.50 174.25 L520.85 175.58 L521.20 178.59 L521.55 182.97 L521.90 188.25 L522.25 193.87 L522.60 199.25 L522.95 203.80 L523.30 207.06 L523.65 208.66 L524.00 208.45 L524.35 206.45 L524.70 202.86 L525.05 198.07 L525.40 192.59 L525.75 186.99 L526.10 181.87 L526.45 177.76 L526.80 175.12 L527.15 174.20 L527.50 175.12 L527.85 177.76 L528.20 181.87 L528.55 186.99 L528.90 192.59 L529.25 198.07 L529.60 202.86 L529.95 206.45 L530.30 208.45 L530.65 208.66 L531.00 207.06 L531.35 203.80 L531.70 199.25 L532.05 193.87 L532.40 188.25 L532.75 182.97 L533.10 178.59 L533.45 175.58 L533.80 174.25 L534.15 174.75 L534.50 177.02 L534.85 180.82 L535.20 185.76 L535.55 191.30 L535.90 196.86 L536.25 201.86 L536.60 205.76 L536.95 208.15 L537.30 208.78 L537.65 207.58 L538.00 204.68 L538.35 200.38 L538.70 195.15 L539.05 189.53 L539.40 184.11 L539.75 179.48 L540.10 176.12 L540.45 174.39 L540.80 174.47 L541.15 176.35 L541.50 179.84 L541.85 184.55 L542.20 190.01 L542.55 195.62 L542.90 200.79 L543.25 204.99 L543.60 207.75 L543.95 208.80 L544.30 208.01 L544.65 205.48 L545.00 201.47 L545.35 196.40 L545.70 190.81 L546.05 185.30 L546.40 180.45 L546.75 176.76 L547.10 174.63 L547.45 174.29 L547.80 175.77 L548.15 178.92 L548.50 183.39 L548.85 188.73 L549.20 194.35 L549.55 199.68 L549.90 204.14 L550.25 207.26 L550.60 208.72 L550.95 208.35 L551.30 206.20 L551.65 202.49 L552.00 197.62 L552.35 192.11 L552.70 186.52 L553.05 181.47 L553.40 177.48 L553.75 174.97 L554.10 174.21 L554.45 175.28 L554.80 178.06 L555.15 182.27 L555.50 187.46 L555.85 193.07 L556.20 198.52 L556.55 203.22 L556.90 206.69 L557.25 208.54 L557.60 208.60 L557.95 206.84 L558.30 203.46 L558.65 198.81 L559.00 193.39 L559.35 187.77 L559.70 182.55 L560.05 178.27 L560.40 175.39 L560.75 174.22 L561.10 174.87 L561.45 177.29 L561.80 181.21 L562.15 186.22 L562.50 191.78 L562.85 197.32 L563.20 202.24 L563.55 206.03 L563.90 208.27 L564.25 208.75 L564.60 207.39 L564.95 204.36 L565.30 199.96 L565.65 194.67 L566.00 189.05 L566.35 183.68 L566.70 179.14 L567.05 175.91 L567.40 174.33 L567.75 174.56 L568.10 176.59 L568.45 180.20 L568.80 185.00 L569.15 190.49 L569.50 196.09 L569.85 201.20 L570.20 205.28 L570.55 207.91 L570.90 208.80 " fill="none" stroke="#d0b020" stroke-width="1.15"/>
<path d="M48 236.8 L236 236.8 L240 261.5 L306 261.5 L306.00 263.30 L306.35 262.43 L306.70 259.92 L307.05 256.03 L307.40 251.18 L307.75 245.87 L308.10 240.67 L308.45 236.13 L308.80 232.73 L309.15 230.83 L309.50 230.63 L309.85 232.15 L310.20 235.24 L310.55 239.55 L310.90 244.65 L311.25 249.98 L311.60 254.99 L311.95 259.14 L312.30 262.00 L312.65 263.25 L313.00 262.78 L313.35 260.63 L313.70 257.02 L314.05 252.34 L314.40 247.09 L314.75 241.82 L315.10 237.08 L315.45 233.38 L315.80 231.12 L316.15 230.52 L316.50 231.66 L316.85 234.41 L317.20 238.48 L317.55 243.44 L317.90 248.77 L318.25 253.90 L318.60 258.29 L318.95 261.48 L319.30 263.12 L319.65 263.04 L320.00 261.26 L320.35 257.96 L320.70 253.48 L321.05 248.31 L321.40 243.00 L321.75 238.09 L322.10 234.12 L322.45 231.49 L322.80 230.50 L323.15 231.25 L323.50 233.65 L323.85 237.45 L324.20 242.26 L324.55 247.55 L324.90 252.78 L325.25 257.38 L325.60 260.87 L325.95 262.89 L326.30 263.21 L326.65 261.81 L327.00 258.83 L327.35 254.59 L327.70 249.53 L328.05 244.19 L328.40 239.15 L328.75 234.92 L329.10 231.96 L329.45 230.58 L329.80 230.93 L330.15 232.97 L330.50 236.48 L330.85 241.10 L331.20 246.33 L331.55 251.62 L331.90 256.41 L332.25 260.19 L332.60 262.57 L332.95 263.29 L333.30 262.28 L333.65 259.64 L334.00 255.65 L334.35 250.73 L334.70 245.41 L335.05 240.25 L335.40 235.79 L335.75 232.50 L336.10 230.74 L336.45 230.69 L336.80 232.36 L337.15 235.56 L337.50 239.97 L337.85 245.10 L338.20 250.43 L338.55 255.39 L338.90 259.44 L339.25 262.17 L339.60 263.28 L339.95 262.66 L340.30 260.37 L340.65 256.66 L341.00 251.91 L341.35 246.63 L341.70 241.38 L342.05 236.72 L342.40 233.13 L342.75 231.00 L343.10 230.55 L343.45 231.83 L343.80 234.71 L344.15 238.88 L344.50 243.89 L344.85 249.23 L345.20 254.31 L345.55 258.62 L345.90 261.68 L346.25 263.18 L346.60 262.96 L346.95 261.03 L347.30 257.61 L347.65 253.06 L348.00 247.86 L348.35 242.55 L348.70 237.71 L349.05 233.83 L349.40 231.34 L349.75 230.50 L350.10 231.39 L350.45 233.93 L350.80 237.83 L351.15 242.70 L351.50 248.01 L351.85 253.20 L352.20 257.73 L352.55 261.11 L352.90 262.99 L353.25 263.16 L353.60 261.61 L353.95 258.51 L354.30 254.18 L354.65 249.08 L355.00 243.74 L355.35 238.74 L355.70 234.61 L356.05 231.77 L356.40 230.54 L356.75 231.04 L357.10 233.21 L357.45 236.84 L357.80 241.53 L358.15 246.79 L358.50 252.06 L358.85 256.78 L359.20 260.46 L359.55 262.70 L359.90 263.27 L360.25 262.11 L360.60 259.34 L360.95 255.25 L361.30 250.28 L361.65 244.95 L362.00 239.83 L362.35 235.45 L362.70 232.29 L363.05 230.67 L363.40 230.77 L363.75 232.58 L364.10 235.90 L364.45 240.39 L364.80 245.56 L365.15 250.88 L365.50 255.78 L365.85 259.73 L366.20 262.33 L366.55 263.30 L366.90 262.53 L367.25 260.10 L367.60 256.28 L367.95 251.47 L368.30 246.17 L368.65 240.95 L369.00 236.36 L369.35 232.89 L369.70 230.89 L370.05 230.59 L370.40 232.02 L370.75 235.02 L371.10 239.28 L371.45 244.35 L371.80 249.68 L372.15 254.72 L372.50 258.93 L372.85 261.87 L373.20 263.23 L373.55 262.86 L373.90 260.79 L374.25 257.26 L374.60 252.63 L374.95 247.40 L375.30 242.11 L375.65 237.33 L376.00 233.56 L376.35 231.20 L376.70 230.51 L377.05 231.55 L377.40 234.21 L377.75 238.22 L378.10 243.14 L378.45 248.47 L378.80 253.62 L379.15 258.07 L379.50 261.33 L379.85 263.07 L380.20 263.09 L380.55 261.41 L380.90 258.18 L381.25 253.76 L381.60 248.62 L381.95 243.29 L382.30 238.35 L382.65 234.31 L383.00 231.60 L383.35 230.51 L383.70 231.16 L384.05 233.47 L384.40 237.20 L384.75 241.96 L385.10 247.24 L385.45 252.49 L385.80 257.14 L386.15 260.71 L386.50 262.82 L386.85 263.24 L387.20 261.94 L387.55 259.04 L387.90 254.86 L388.25 249.83 L388.60 244.50 L388.95 239.42 L389.30 235.13 L389.65 232.09 L390.00 230.61 L390.35 230.86 L390.70 232.81 L391.05 236.24 L391.40 240.81 L391.75 246.02 L392.10 251.32 L392.45 256.16 L392.80 260.01 L393.15 262.48 L393.50 263.30 L393.85 262.38 L394.20 259.83 L394.55 255.90 L394.90 251.03 L395.25 245.71 L395.60 240.53 L395.95 236.01 L396.30 232.65 L396.65 230.80 L397.00 230.65 L397.35 232.22 L397.70 235.34 L398.05 239.69 L398.40 244.80 L398.75 250.13 L399.10 255.12 L399.45 259.24 L399.80 262.06 L400.15 263.26 L400.50 262.74 L400.85 260.54 L401.20 256.90 L401.55 252.20 L401.90 246.94 L402.25 241.67 L402.60 236.96 L402.95 233.30 L403.30 231.08 L403.65 230.53 L404.00 231.72 L404.35 234.51 L404.70 238.61 L405.05 243.59 L405.40 248.92 L405.75 254.04 L406.10 258.40 L406.45 261.55 L406.80 263.14 L407.15 263.01 L407.50 261.19 L407.85 257.84 L408.20 253.34 L408.55 248.16 L408.90 242.85 L409.25 237.96 L409.60 234.02 L409.95 231.44 L410.30 230.50 L410.65 231.30 L411.00 233.74 L411.35 237.58 L411.70 242.40 L412.05 247.70 L412.40 252.92 L412.75 257.50 L413.10 260.95 L413.45 262.92 L413.80 263.20 L414.15 261.75 L414.50 258.72 L414.85 254.45 L415.20 249.38 L415.55 244.04 L415.90 239.01 L416.25 234.81 L416.60 231.90 L416.95 230.56 L417.30 230.96 L417.65 233.05 L418.00 236.60 L418.35 241.24 L418.70 246.48 L419.05 251.76 L419.40 256.53 L419.75 260.28 L420.10 262.62 L420.45 263.29 L420.80 262.22 L421.15 259.54 L421.50 255.52 L421.85 250.58 L422.20 245.26 L422.55 240.11 L422.90 235.67 L423.25 232.43 L423.60 230.72 L423.95 230.72 L424.30 232.43 L424.65 235.67 L425.00 240.11 L425.35 245.26 L425.70 250.58 L426.05 255.52 L426.40 259.54 L426.75 262.22 L427.10 263.29 L427.45 262.62 L427.80 260.28 L428.15 256.53 L428.50 251.76 L428.85 246.48 L429.20 241.24 L429.55 236.60 L429.90 233.05 L430.25 230.96 L430.60 230.56 L430.95 231.90 L431.30 234.81 L431.65 239.01 L432.00 244.04 L432.35 249.38 L432.70 254.45 L433.05 258.72 L433.40 261.75 L433.75 263.20 L434.10 262.92 L434.45 260.95 L434.80 257.50 L435.15 252.92 L435.50 247.70 L435.85 242.40 L436.20 237.58 L436.55 233.74 L436.90 231.30 L437.25 230.50 L437.60 231.44 L437.95 234.02 L438.30 237.96 L438.65 242.85 L439.00 248.16 L439.35 253.34 L439.70 257.84 L440.05 261.19 L440.40 263.01 L440.75 263.14 L441.10 261.55 L441.45 258.40 L441.80 254.04 L442.15 248.92 L442.50 243.59 L442.85 238.61 L443.20 234.51 L443.55 231.72 L443.90 230.53 L444.25 231.08 L444.60 233.30 L444.95 236.96 L445.30 241.67 L445.65 246.94 L446.00 252.20 L446.35 256.90 L446.70 260.54 L447.05 262.74 L447.40 263.26 L447.75 262.06 L448.10 259.24 L448.45 255.12 L448.80 250.13 L449.15 244.80 L449.50 239.69 L449.85 235.34 L450.20 232.22 L450.55 230.65 L450.90 230.80 L451.25 232.65 L451.60 236.01 L451.95 240.53 L452.30 245.71 L452.65 251.03 L453.00 255.90 L453.35 259.83 L453.70 262.38 L454.05 263.30 L454.40 262.48 L454.75 260.01 L455.10 256.16 L455.45 251.32 L455.80 246.02 L456.15 240.81 L456.50 236.24 L456.85 232.81 L457.20 230.86 L457.55 230.61 L457.90 232.09 L458.25 235.13 L458.60 239.42 L458.95 244.50 L459.30 249.83 L459.65 254.86 L460.00 259.04 L460.35 261.94 L460.70 263.24 L461.05 262.82 L461.40 260.71 L461.75 257.14 L462.10 252.49 L462.45 247.24 L462.80 241.96 L463.15 237.20 L463.50 233.47 L463.85 231.16 L464.20 230.51 L464.55 231.60 L464.90 234.31 L465.25 238.35 L465.60 243.29 L465.95 248.62 L466.30 253.76 L466.65 258.18 L467.00 261.41 L467.35 263.09 L467.70 263.07 L468.05 261.33 L468.40 258.07 L468.75 253.62 L469.10 248.47 L469.45 243.14 L469.80 238.22 L470.15 234.21 L470.50 231.55 L470.85 230.51 L471.20 231.20 L471.55 233.56 L471.90 237.33 L472.25 242.11 L472.60 247.40 L472.95 252.63 L473.30 257.26 L473.65 260.79 L474.00 262.86 L474.35 263.23 L474.70 261.87 L475.05 258.93 L475.40 254.72 L475.75 249.68 L476.10 244.35 L476.45 239.28 L476.80 235.02 L477.15 232.02 L477.50 230.59 L477.85 230.89 L478.20 232.89 L478.55 236.36 L478.90 240.95 L479.25 246.17 L479.60 251.47 L479.95 256.28 L480.30 260.10 L480.65 262.53 L481.00 263.30 L481.35 262.33 L481.70 259.73 L482.05 255.78 L482.40 250.88 L482.75 245.56 L483.10 240.39 L483.45 235.90 L483.80 232.58 L484.15 230.77 L484.50 230.67 L484.85 232.29 L485.20 235.45 L485.55 239.83 L485.90 244.95 L486.25 250.28 L486.60 255.25 L486.95 259.34 L487.30 262.11 L487.65 263.27 L488.00 262.70 L488.35 260.46 L488.70 256.78 L489.05 252.06 L489.40 246.79 L489.75 241.53 L490.10 236.84 L490.45 233.21 L490.80 231.04 L491.15 230.54 L491.50 231.77 L491.85 234.61 L492.20 238.74 L492.55 243.74 L492.90 249.08 L493.25 254.18 L493.60 258.51 L493.95 261.61 L494.30 263.16 L494.65 262.99 L495.00 261.11 L495.35 257.73 L495.70 253.20 L496.05 248.01 L496.40 242.70 L496.75 237.83 L497.10 233.93 L497.45 231.39 L497.80 230.50 L498.15 231.34 L498.50 233.83 L498.85 237.71 L499.20 242.55 L499.55 247.86 L499.90 253.06 L500.25 257.61 L500.60 261.03 L500.95 262.96 L501.30 263.18 L501.65 261.68 L502.00 258.62 L502.35 254.31 L502.70 249.23 L503.05 243.89 L503.40 238.88 L503.75 234.71 L504.10 231.83 L504.45 230.55 L504.80 231.00 L505.15 233.13 L505.50 236.72 L505.85 241.38 L506.20 246.63 L506.55 251.91 L506.90 256.66 L507.25 260.37 L507.60 262.66 L507.95 263.28 L508.30 262.17 L508.65 259.44 L509.00 255.39 L509.35 250.43 L509.70 245.10 L510.05 239.97 L510.40 235.56 L510.75 232.36 L511.10 230.69 L511.45 230.74 L511.80 232.50 L512.15 235.79 L512.50 240.25 L512.85 245.41 L513.20 250.73 L513.55 255.65 L513.90 259.64 L514.25 262.28 L514.60 263.29 L514.95 262.57 L515.30 260.19 L515.65 256.41 L516.00 251.62 L516.35 246.33 L516.70 241.10 L517.05 236.48 L517.40 232.97 L517.75 230.93 L518.10 230.58 L518.45 231.96 L518.80 234.92 L519.15 239.15 L519.50 244.19 L519.85 249.53 L520.20 254.59 L520.55 258.83 L520.90 261.81 L521.25 263.21 L521.60 262.89 L521.95 260.87 L522.30 257.38 L522.65 252.78 L523.00 247.55 L523.35 242.26 L523.70 237.45 L524.05 233.65 L524.40 231.25 L524.75 230.50 L525.10 231.49 L525.45 234.12 L525.80 238.09 L526.15 243.00 L526.50 248.31 L526.85 253.48 L527.20 257.96 L527.55 261.26 L527.90 263.04 L528.25 263.12 L528.60 261.48 L528.95 258.29 L529.30 253.90 L529.65 248.77 L530.00 243.44 L530.35 238.48 L530.70 234.41 L531.05 231.66 L531.40 230.52 L531.75 231.12 L532.10 233.38 L532.45 237.08 L532.80 241.82 L533.15 247.09 L533.50 252.34 L533.85 257.02 L534.20 260.63 L534.55 262.78 L534.90 263.25 L535.25 262.00 L535.60 259.14 L535.95 254.99 L536.30 249.98 L536.65 244.65 L537.00 239.55 L537.35 235.24 L537.70 232.15 L538.05 230.63 L538.40 230.83 L538.75 232.73 L539.10 236.13 L539.45 240.67 L539.80 245.87 L540.15 251.18 L540.50 256.03 L540.85 259.92 L541.20 262.43 L541.55 263.30 L541.90 262.43 L542.25 259.92 L542.60 256.03 L542.95 251.18 L543.30 245.87 L543.65 240.67 L544.00 236.13 L544.35 232.73 L544.70 230.83 L545.05 230.63 L545.40 232.15 L545.75 235.24 L546.10 239.55 L546.45 244.65 L546.80 249.98 L547.15 254.99 L547.50 259.14 L547.85 262.00 L548.20 263.25 L548.55 262.78 L548.90 260.63 L549.25 257.02 L549.60 252.34 L549.95 247.09 L550.30 241.82 L550.65 237.08 L551.00 233.38 L551.35 231.12 L551.70 230.52 L552.05 231.66 L552.40 234.41 L552.75 238.48 L553.10 243.44 L553.45 248.77 L553.80 253.90 L554.15 258.29 L554.50 261.48 L554.85 263.12 L555.20 263.04 L555.55 261.26 L555.90 257.96 L556.25 253.48 L556.60 248.31 L556.95 243.00 L557.30 238.09 L557.65 234.12 L558.00 231.49 L558.35 230.50 L558.70 231.25 L559.05 233.65 L559.40 237.45 L559.75 242.26 L560.10 247.55 L560.45 252.78 L560.80 257.38 L561.15 260.87 L561.50 262.89 L561.85 263.21 L562.20 261.81 L562.55 258.83 L562.90 254.59 L563.25 249.53 L563.60 244.19 L563.95 239.15 L564.30 234.92 L564.65 231.96 L565.00 230.58 L565.35 230.93 L565.70 232.97 L566.05 236.48 L566.40 241.10 L566.75 246.33 L567.10 251.62 L567.45 256.41 L567.80 260.19 L568.15 262.57 L568.50 263.29 L568.85 262.28 L569.20 259.64 L569.55 255.65 L569.90 250.73 L570.25 245.41 L570.60 240.25 L570.95 235.79 " fill="none" stroke="#d01420" stroke-width="1.15"/>
<line x1="217.5" y1="268.8" x2="285.5" y2="268.8" stroke="#e01418" stroke-width="1.15"/>
<circle cx="285.5" cy="268.8" r="1.2" fill="#ff2020"/><circle cx="218" cy="268.8" r="1" fill="#ff2020"/>
<text x="290.70" y="271.3" font-size="7" fill="#20a828" font-weight="normal" textLength="52.19" lengthAdjust="spacingAndGlyphs" >tRPRE : 38.941nS</text>
<path d="M48 300.6 L238.5 300.6 L241.5 316.9 L243.5 315.6 L245 316.3 L571 316.3" fill="none" stroke="#d418d4" stroke-width="1.15"/>
<text x="13.30" y="119.8" font-size="7" fill="#30e830" font-weight="normal" textLength="22.78" lengthAdjust="spacingAndGlyphs" stroke="#30e830" stroke-width="0.25">1.0171V</text>
<text x="15.50" y="140.2" font-size="7.4" fill="#10f010" font-weight="bold" textLength="16.52" lengthAdjust="spacingAndGlyphs" >WE0</text>
<rect x="15.5" y="141.0" width="16.5" height="0.9" fill="#10f010" />
<text x="12.00" y="160.3" font-size="7" fill="#30e830" font-weight="normal" textLength="26.17" lengthAdjust="spacingAndGlyphs" stroke="#30e830" stroke-width="0.25">-1.0171V</text>
<text x="13.00" y="174.6" font-size="7" fill="#ece478" font-weight="normal" textLength="20.17" lengthAdjust="spacingAndGlyphs" stroke="#ece478" stroke-width="0.25">1.526V</text>
<text x="16.00" y="195.1" font-size="7.4" fill="#f0e020" font-weight="bold" textLength="13.43" lengthAdjust="spacingAndGlyphs" >RE0</text>
<rect x="16" y="195.9" width="14" height="0.9" fill="#f0e020" />
<text x="12.50" y="216.2" font-size="7" fill="#ece478" font-weight="normal" textLength="24.99" lengthAdjust="spacingAndGlyphs" stroke="#ece478" stroke-width="0.25">-1.5264V</text>
<text x="12.80" y="231" font-size="7" fill="#dd1515" font-weight="normal" textLength="23.28" lengthAdjust="spacingAndGlyphs" stroke="#dd1515" stroke-width="0.25">1.5257V</text>
<text x="16.00" y="251.8" font-size="7.4" fill="#ee1111" font-weight="bold" textLength="19.64" lengthAdjust="spacingAndGlyphs" >DQS0</text>
<rect x="16" y="252.60000000000002" width="19.5" height="0.9" fill="#ee1111" />
<text x="12.80" y="271.6" font-size="7" fill="#dd1515" font-weight="normal" textLength="25.38" lengthAdjust="spacingAndGlyphs" stroke="#dd1515" stroke-width="0.25">-1.4997V</text>
<text x="13.30" y="285.1" font-size="7" fill="#c035e0" font-weight="normal" textLength="27.93" lengthAdjust="spacingAndGlyphs" stroke="#c035e0" stroke-width="0.25">862.02mV</text>
<text x="18.00" y="304.7" font-size="7.4" fill="#d020f0" font-weight="bold" textLength="14.19" lengthAdjust="spacingAndGlyphs" >DQ0</text>
<rect x="18" y="305.5" width="14" height="0.9" fill="#d020f0" />
<text x="13.30" y="325.1" font-size="7" fill="#c035e0" font-weight="normal" textLength="29.62" lengthAdjust="spacingAndGlyphs" stroke="#c035e0" stroke-width="0.25">-714.66mV</text>
<text x="49.50" y="337.6" font-size="7" fill="#fff" font-weight="normal" textLength="26.61" lengthAdjust="spacingAndGlyphs" >5.8051μS</text>
<text x="154.50" y="337.6" font-size="7" fill="#fff" font-weight="normal" textLength="26.61" lengthAdjust="spacingAndGlyphs" >5.8645μS</text>
<text x="259.00" y="337.6" font-size="7" fill="#fff" font-weight="normal" textLength="23.61" lengthAdjust="spacingAndGlyphs" >5.924μS</text>
<text x="364.20" y="337.6" font-size="7" fill="#fff" font-weight="normal" textLength="27.16" lengthAdjust="spacingAndGlyphs" >5.9834μS</text>
<text x="469.60" y="337.6" font-size="7" fill="#fff" font-weight="normal" textLength="26.76" lengthAdjust="spacingAndGlyphs" >6.0429μS</text>
<text x="557.00" y="337.6" font-size="7" fill="#fff" font-weight="normal" textLength="27.31" lengthAdjust="spacingAndGlyphs" >6.1023μS</text>
<text x="259.00" y="345.6" font-size="7.4" fill="#fff" font-weight="bold" textLength="60.13" lengthAdjust="spacingAndGlyphs" >Time(Seconds) --&gt;</text>
<rect x="29.3" y="340" width="7" height="6.6" fill="#fff" />
<path d="M30.6 343.2 L32.1 344.8 L35.1 341.3" fill="none" stroke="#333" stroke-width="0.9"/>
<text x="40.60" y="346.2" font-size="7.4" fill="#ff00ff" font-weight="bold" textLength="14.80" lengthAdjust="spacingAndGlyphs" >DQ0</text>
<rect x="68" y="340" width="7" height="6.6" fill="#fff" />
<path d="M69.3 343.2 L70.8 344.8 L73.8 341.3" fill="none" stroke="#333" stroke-width="0.9"/>
<text x="79.00" y="346.2" font-size="7.4" fill="#ff0000" font-weight="bold" textLength="20.14" lengthAdjust="spacingAndGlyphs" >DQS0</text>
<rect x="108.7" y="340" width="7" height="6.6" fill="#fff" />
<path d="M110.0 343.2 L111.5 344.8 L114.5 341.3" fill="none" stroke="#333" stroke-width="0.9"/>
<text x="120.00" y="346.2" font-size="7.4" fill="#ffd700" font-weight="bold" textLength="13.43" lengthAdjust="spacingAndGlyphs" >RE0</text>
<rect x="152.5" y="340" width="7" height="6.6" fill="#fff" />
<path d="M153.8 343.2 L155.3 344.8 L158.3 341.3" fill="none" stroke="#333" stroke-width="0.9"/>
<text x="163.00" y="346.2" font-size="7.4" fill="#00ff00" font-weight="bold" textLength="16.02" lengthAdjust="spacingAndGlyphs" >WE0</text>
<rect x="375.5" y="342.6" width="93.7" height="11.5" fill="#e1e1e1" stroke="#adadad" stroke-width="0.8"/>
<text x="378.00" y="351.2" font-size="7" fill="#111" font-weight="normal" textLength="53.74" lengthAdjust="spacingAndGlyphs" >Show All Messages</text>
<path d="M462.8 347.2 L464.5 349 L466.2 347.2" fill="none" stroke="#444" stroke-width="0.8"/>
<rect x="3" y="358" width="245" height="91" fill="#1b2266" />
<rect x="3" y="357" width="245" height="1" fill="#1b2266" opacity="0.45"/>
<rect x="4" y="359" width="243" height="89" fill="#ffffff" />
<rect x="4" y="383" width="233" height="1.7" fill="#d8d8d8" />
<rect x="4" y="396" width="233" height="1.7" fill="#d8d8d8" />
<rect x="4" y="409" width="233" height="1.7" fill="#d8d8d8" />
<rect x="4" y="422" width="233" height="1.7" fill="#d8d8d8" />
<rect x="4" y="435" width="233" height="1.7" fill="#d8d8d8" />
<rect x="34" y="359" width="1" height="89" fill="#d4d4d4" />
<rect x="94" y="359" width="1" height="89" fill="#d4d4d4" />
<rect x="4" y="371" width="233" height="13" fill="#3399ff" />
<rect x="34" y="371" width="1" height="13" fill="#5aaaf8" />
<rect x="94" y="371" width="1" height="13" fill="#5aaaf8" />
<rect x="237" y="359" width="10" height="89" fill="#f2f2f2" />
<rect x="238" y="369.5" width="8" height="9.5" fill="#d6d6d6" />
<path d="M239.7 365.5 L242.0 363 L244.3 365.5" fill="none" stroke="#444" stroke-width="1"/>
<path d="M239.7 441.5 L242.0 444 L244.3 441.5" fill="none" stroke="#555" stroke-width="1"/>
<text x="9.50" y="368.3" font-size="7.2" fill="#303030" font-weight="normal" textLength="13.99" lengthAdjust="spacingAndGlyphs" >S.No</text>
<text x="39.10" y="368.3" font-size="7.2" fill="#303030" font-weight="normal" textLength="30.37" lengthAdjust="spacingAndGlyphs" >TimeStamp</text>
<text x="98.10" y="368.3" font-size="7.2" fill="#303030" font-weight="normal" textLength="13.44" lengthAdjust="spacingAndGlyphs" >State</text>
<text x="7.50" y="380.3" font-size="7.4" fill="#fff" font-weight="normal" textLength="2.06" lengthAdjust="spacingAndGlyphs" stroke="#fff" stroke-width="0.08">1</text>
<text x="36.30" y="380.3" font-size="7.4" fill="#fff" font-weight="normal" textLength="26.73" lengthAdjust="spacingAndGlyphs" stroke="#fff" stroke-width="0.08">5.9008μS</text>
<text x="95.60" y="380.3" font-size="7.4" fill="#fff" font-weight="normal" textLength="30.60" lengthAdjust="spacingAndGlyphs" stroke="#fff" stroke-width="0.08">DATAOUT</text>
<text x="6.90" y="393.3" font-size="7.4" fill="#101010" font-weight="normal" textLength="3.61" lengthAdjust="spacingAndGlyphs" stroke="#101010" stroke-width="0.08">2</text>
<text x="36.30" y="393.3" font-size="7.4" fill="#101010" font-weight="normal" textLength="26.73" lengthAdjust="spacingAndGlyphs" stroke="#101010" stroke-width="0.08">6.7053μS</text>
<text x="95.00" y="393.3" font-size="7.4" fill="#101010" font-weight="normal" textLength="23.81" lengthAdjust="spacingAndGlyphs" stroke="#101010" stroke-width="0.08">DATAIN</text>
<text x="6.90" y="406.3" font-size="7.4" fill="#101010" font-weight="normal" textLength="3.61" lengthAdjust="spacingAndGlyphs" stroke="#101010" stroke-width="0.08">3</text>
<text x="36.30" y="406.3" font-size="7.4" fill="#101010" font-weight="normal" textLength="26.73" lengthAdjust="spacingAndGlyphs" stroke="#101010" stroke-width="0.08">10.949μS</text>
<text x="95.00" y="406.3" font-size="7.4" fill="#101010" font-weight="normal" textLength="23.81" lengthAdjust="spacingAndGlyphs" stroke="#101010" stroke-width="0.08">DATAIN</text>
<text x="6.90" y="419.3" font-size="7.4" fill="#101010" font-weight="normal" textLength="3.61" lengthAdjust="spacingAndGlyphs" stroke="#101010" stroke-width="0.08">4</text>
<text x="36.30" y="419.3" font-size="7.4" fill="#101010" font-weight="normal" textLength="27.12" lengthAdjust="spacingAndGlyphs" stroke="#101010" stroke-width="0.08">11.421μS</text>
<text x="95.00" y="419.3" font-size="7.4" fill="#101010" font-weight="normal" textLength="23.81" lengthAdjust="spacingAndGlyphs" stroke="#101010" stroke-width="0.08">DATAIN</text>
<text x="6.90" y="432.3" font-size="7.4" fill="#101010" font-weight="normal" textLength="3.61" lengthAdjust="spacingAndGlyphs" stroke="#101010" stroke-width="0.08">5</text>
<text x="36.30" y="432.3" font-size="7.4" fill="#101010" font-weight="normal" textLength="26.73" lengthAdjust="spacingAndGlyphs" stroke="#101010" stroke-width="0.08">15.345μS</text>
<text x="95.00" y="432.3" font-size="7.4" fill="#101010" font-weight="normal" textLength="23.81" lengthAdjust="spacingAndGlyphs" stroke="#101010" stroke-width="0.08">DATAIN</text>
<text x="6.90" y="445.3" font-size="7.4" fill="#101010" font-weight="normal" textLength="3.61" lengthAdjust="spacingAndGlyphs" stroke="#101010" stroke-width="0.08">6</text>
<text x="36.30" y="445.3" font-size="7.4" fill="#101010" font-weight="normal" textLength="26.73" lengthAdjust="spacingAndGlyphs" stroke="#101010" stroke-width="0.08">15.818μS</text>
<text x="95.00" y="445.3" font-size="7.4" fill="#101010" font-weight="normal" textLength="23.81" lengthAdjust="spacingAndGlyphs" stroke="#101010" stroke-width="0.08">DATAIN</text>
<rect x="250" y="358" width="350" height="91" fill="#1b2266" />
<rect x="250" y="357" width="350" height="1" fill="#1b2266" opacity="0.45"/>
<rect x="251" y="359" width="348" height="89" fill="#ffffff" />
<rect x="251" y="370" width="337" height="1.7" fill="#d8d8d8" />
<rect x="251" y="383" width="337" height="1.7" fill="#d8d8d8" />
<rect x="251" y="396" width="337" height="1.7" fill="#d8d8d8" />
<rect x="251" y="409" width="337" height="1.7" fill="#d8d8d8" />
<rect x="251" y="422" width="337" height="1.7" fill="#d8d8d8" />
<rect x="251" y="435" width="337" height="1.7" fill="#d8d8d8" />
<rect x="280" y="359" width="1" height="89" fill="#d4d4d4" />
<rect x="369" y="359" width="1" height="89" fill="#d4d4d4" />
<rect x="469" y="359" width="1" height="89" fill="#d4d4d4" />
<rect x="528" y="359" width="1" height="89" fill="#d4d4d4" />
<rect x="587" y="359" width="1" height="89" fill="#d4d4d4" />
<rect x="588" y="359" width="11" height="89" fill="#f2f2f2" />
<rect x="589" y="402.5" width="9" height="10.5" fill="#d6d6d6" />
<path d="M591.2 365.5 L593.5 363 L595.8 365.5" fill="none" stroke="#444" stroke-width="1"/>
<path d="M591.2 441.5 L593.5 444 L595.8 441.5" fill="none" stroke="#555" stroke-width="1"/>
<text x="256.60" y="368.3" font-size="7.2" fill="#303030" font-weight="normal" textLength="13.39" lengthAdjust="spacingAndGlyphs" >S.No</text>
<text x="285.70" y="368.3" font-size="7.2" fill="#303030" font-weight="normal" textLength="37.36" lengthAdjust="spacingAndGlyphs" >Measurement</text>
<text x="373.90" y="368.3" font-size="7.2" fill="#303030" font-weight="normal" textLength="15.78" lengthAdjust="spacingAndGlyphs" >Value</text>
<text x="474.10" y="368.3" font-size="7.2" fill="#303030" font-weight="normal" textLength="24.42" lengthAdjust="spacingAndGlyphs" >LowLimit</text>
<text x="533.40" y="368.3" font-size="7.2" fill="#303030" font-weight="normal" textLength="24.57" lengthAdjust="spacingAndGlyphs" >HighLimit</text>
<text x="254.20" y="380.3" font-size="7.4" fill="#101010" font-weight="normal" textLength="10.18" lengthAdjust="spacingAndGlyphs" stroke="#101010" stroke-width="0.08">172</text>
<text x="282.40" y="380.3" font-size="7.4" fill="#101010" font-weight="normal" textLength="21.30" lengthAdjust="spacingAndGlyphs" stroke="#101010" stroke-width="0.08">tRCavg</text>
<text x="370.90" y="380.3" font-size="7.4" fill="#101010" font-weight="normal" textLength="27.60" lengthAdjust="spacingAndGlyphs" stroke="#101010" stroke-width="0.08">3.7614nS</text>
<text x="472.00" y="380.3" font-size="7.4" fill="#101010" font-weight="normal" textLength="19.97" lengthAdjust="spacingAndGlyphs" stroke="#101010" stroke-width="0.08">3.75nS</text>
<text x="530.10" y="380.3" font-size="7.4" fill="#101010" font-weight="normal" textLength="9.87" lengthAdjust="spacingAndGlyphs" stroke="#101010" stroke-width="0.08">NA</text>
<text x="254.20" y="393.3" font-size="7.4" fill="#101010" font-weight="normal" textLength="10.18" lengthAdjust="spacingAndGlyphs" stroke="#101010" stroke-width="0.08">173</text>
<text x="282.40" y="393.3" font-size="7.4" fill="#101010" font-weight="normal" textLength="21.30" lengthAdjust="spacingAndGlyphs" stroke="#101010" stroke-width="0.08">tRCavg</text>
<text x="370.90" y="393.3" font-size="7.4" fill="#101010" font-weight="normal" textLength="24.49" lengthAdjust="spacingAndGlyphs" stroke="#101010" stroke-width="0.08">3.784nS</text>
<text x="472.00" y="393.3" font-size="7.4" fill="#101010" font-weight="normal" textLength="19.97" lengthAdjust="spacingAndGlyphs" stroke="#101010" stroke-width="0.08">3.75nS</text>
<text x="530.10" y="393.3" font-size="7.4" fill="#101010" font-weight="normal" textLength="9.87" lengthAdjust="spacingAndGlyphs" stroke="#101010" stroke-width="0.08">NA</text>
<text x="254.20" y="406.3" font-size="7.4" fill="#101010" font-weight="normal" textLength="10.18" lengthAdjust="spacingAndGlyphs" stroke="#101010" stroke-width="0.08">174</text>
<text x="282.40" y="406.3" font-size="7.4" fill="#101010" font-weight="normal" textLength="21.30" lengthAdjust="spacingAndGlyphs" stroke="#101010" stroke-width="0.08">tRCavg</text>
<text x="370.90" y="406.3" font-size="7.4" fill="#101010" font-weight="normal" textLength="27.60" lengthAdjust="spacingAndGlyphs" stroke="#101010" stroke-width="0.08">3.7866nS</text>
<text x="472.00" y="406.3" font-size="7.4" fill="#101010" font-weight="normal" textLength="19.97" lengthAdjust="spacingAndGlyphs" stroke="#101010" stroke-width="0.08">3.75nS</text>
<text x="530.10" y="406.3" font-size="7.4" fill="#101010" font-weight="normal" textLength="9.87" lengthAdjust="spacingAndGlyphs" stroke="#101010" stroke-width="0.08">NA</text>
<text x="254.20" y="419.3" font-size="7.4" fill="#101010" font-weight="normal" textLength="10.18" lengthAdjust="spacingAndGlyphs" stroke="#101010" stroke-width="0.08">175</text>
<text x="282.40" y="419.3" font-size="7.4" fill="#101010" font-weight="normal" textLength="21.30" lengthAdjust="spacingAndGlyphs" stroke="#101010" stroke-width="0.08">tRCavg</text>
<text x="370.90" y="419.3" font-size="7.4" fill="#101010" font-weight="normal" textLength="27.60" lengthAdjust="spacingAndGlyphs" stroke="#101010" stroke-width="0.08">3.7879nS</text>
<text x="472.00" y="419.3" font-size="7.4" fill="#101010" font-weight="normal" textLength="19.97" lengthAdjust="spacingAndGlyphs" stroke="#101010" stroke-width="0.08">3.75nS</text>
<text x="530.10" y="419.3" font-size="7.4" fill="#101010" font-weight="normal" textLength="9.87" lengthAdjust="spacingAndGlyphs" stroke="#101010" stroke-width="0.08">NA</text>
<text x="254.20" y="432.3" font-size="7.4" fill="#101010" font-weight="normal" textLength="10.18" lengthAdjust="spacingAndGlyphs" stroke="#101010" stroke-width="0.08">176</text>
<text x="282.40" y="432.3" font-size="7.4" fill="#101010" font-weight="normal" textLength="21.30" lengthAdjust="spacingAndGlyphs" stroke="#101010" stroke-width="0.08">tRCavg</text>
<text x="370.90" y="432.3" font-size="7.4" fill="#101010" font-weight="normal" textLength="27.60" lengthAdjust="spacingAndGlyphs" stroke="#101010" stroke-width="0.08">3.7891nS</text>
<text x="472.00" y="432.3" font-size="7.4" fill="#101010" font-weight="normal" textLength="19.97" lengthAdjust="spacingAndGlyphs" stroke="#101010" stroke-width="0.08">3.75nS</text>
<text x="530.10" y="432.3" font-size="7.4" fill="#101010" font-weight="normal" textLength="9.87" lengthAdjust="spacingAndGlyphs" stroke="#101010" stroke-width="0.08">NA</text>
<text x="254.20" y="445.3" font-size="7.4" fill="#101010" font-weight="normal" textLength="10.18" lengthAdjust="spacingAndGlyphs" stroke="#101010" stroke-width="0.08">177</text>
<text x="282.40" y="445.3" font-size="7.4" fill="#101010" font-weight="normal" textLength="21.30" lengthAdjust="spacingAndGlyphs" stroke="#101010" stroke-width="0.08">tRCavg</text>
<text x="370.90" y="445.3" font-size="7.4" fill="#101010" font-weight="normal" textLength="27.60" lengthAdjust="spacingAndGlyphs" stroke="#101010" stroke-width="0.08">3.7899nS</text>
<text x="472.00" y="445.3" font-size="7.4" fill="#101010" font-weight="normal" textLength="19.97" lengthAdjust="spacingAndGlyphs" stroke="#101010" stroke-width="0.08">3.75nS</text>
<text x="530.10" y="445.3" font-size="7.4" fill="#101010" font-weight="normal" textLength="9.87" lengthAdjust="spacingAndGlyphs" stroke="#101010" stroke-width="0.08">NA</text>
<text x="524.44" y="440.8" font-size="13.6" fill="#000" font-weight="normal" textLength="71.25" lengthAdjust="spacingAndGlyphs" stroke="#fff" stroke-width="0.6" paint-order="stroke">EEChina.com</text>
<rect x="576" y="112" width="15" height="15" fill="#eaf8fa" />
<rect x="576.5" y="112.5" width="14" height="14" fill="none" stroke="#f6fcfc" stroke-width="1"/>
<circle cx="583.2" cy="118.5" r="5" fill="#f8ffff" stroke="#9cc0d0" stroke-width="1.6"/>
<path d="M587 122 L589.8 124.8" stroke="#1f4f60" stroke-width="2.4" stroke-linecap="round"/>
<path d="M581.3 118.4 H585.1 M583.2 116.5 V120.3" stroke="#000" stroke-width="1.8"/>
<rect x="577" y="135" width="15" height="15" fill="#eaf8fa" />
<rect x="577.5" y="135.5" width="14" height="14" fill="none" stroke="#f6fcfc" stroke-width="1"/>
<circle cx="583.4" cy="141.4" r="5" fill="#f8ffff" stroke="#9cc0d0" stroke-width="1.6"/>
<path d="M587.6 145.4 L590.2 148" stroke="#1f4f60" stroke-width="2.4" stroke-linecap="round"/>
<path d="M581 141.5 H585.9" stroke="#000" stroke-width="1.8"/>
<rect x="577" y="157" width="15" height="15" fill="#a8b2e2" />
<rect x="577.5" y="157.5" width="14" height="14" fill="none" stroke="#ccd4f4" stroke-width="1"/>
<path d="M582 168.4 L580 163.2 Q579.6 162 580.6 162 L582 164.2 L581.8 160.4 Q582.2 159.6 583 160.2 L583.6 163 L583.8 159.6 Q584.6 158.8 585.2 159.8 L585.4 163 L586.2 160.4 Q587 159.9 587.4 160.8 L586.9 164.2 L587.8 163 Q588.6 162.9 588.5 163.9 L586.8 168.4 Z" fill="#f4f4ee" stroke="#707070" stroke-width="0.6"/>
<rect x="582" y="167.6" width="4.8" height="1.6" fill="#000" />
<rect x="577" y="183" width="15" height="15" fill="#eaf2fc" />
<rect x="577.5" y="183.5" width="14" height="14" fill="none" stroke="#f4f8ff" stroke-width="1"/>
<path d="M582.6 188.6 Q586.8 187.4 586.6 190.8 Q586.4 193.2 584.2 194" fill="none" stroke="#2456c4" stroke-width="1.5"/>
<path d="M580.6 190.2 L583.4 187 L583.6 191.6 Z" fill="#2456c4"/>
<rect x="577" y="208" width="15" height="15" fill="#c8e0f8" />
<rect x="577.5" y="208.5" width="14" height="14" fill="none" stroke="#e4f0fc" stroke-width="1"/>
<path d="M584.4 211 V219.5 M579.5 215.2 H589.3" stroke="#6a7a90" stroke-width="0.8"/>
<path d="M584.4 209.3 L582.6 212.2 H586.2 Z M584.4 221.2 L582.6 218.4 H586.2 Z M578 215.2 L580.9 213.4 V217 Z M590.8 215.2 L587.9 213.4 V217 Z" fill="#102030"/>
<rect x="577" y="232" width="15" height="15" fill="#e4f0fc" />
<rect x="577.5" y="232.5" width="14" height="14" fill="none" stroke="#f4f8ff" stroke-width="1"/>
<path d="M582.2 232.8 V244.6 M585.3 232.8 V244.6" stroke="#e83c5c" stroke-width="1.5"/>
<rect x="577" y="260" width="18" height="13" fill="#e8e4d8" />
<rect x="577.5" y="260.5" width="17" height="12" fill="none" stroke="#c8d8f8" stroke-width="1"/>
<rect x="580" y="263" width="2" height="9" fill="#302828" />
<rect x="578.5" y="261" width="16" height="1.5" fill="#3070c8" opacity="0.6"/>
<path d="M584 263 L591.5 270.5 M591.5 263 L584 270.5" stroke="#707070" stroke-width="1.1"/>
<rect x="585.5" y="260.8" width="4" height="2.2" fill="#f0c010" />
<ellipse cx="587.4" cy="270" rx="2.6" ry="1.8" fill="#2050c8"/>
<rect x="578" y="279" width="15" height="15" fill="#ffffff" />
<rect x="578.5" y="279.5" width="14" height="14" fill="none" stroke="#b8b8b8" stroke-width="1"/>
<path d="M580.7 285.6 L582.4 282.2 L588.7 282.2 L590.9 285.6 L588.7 289 L582.4 289 Z" fill="#108a7a"/>
<rect x="576" y="297.6" width="18" height="13.6" fill="#ffffff" />
<path d="M578.4 304.4 Q578.8 299.2 580.6 300.8 Q581.8 302.2 582.4 308.2 Q583.6 311 584.6 303.6 Q585.4 297.6 587 300.6 Q588.6 304 589.4 308 Q590.6 311 592.2 304.8" fill="none" stroke="#7a0000" stroke-width="2.4"/>
<path d="M578.4 304.4 Q578.8 299.2 580.6 300.8 Q581.8 302.2 582.4 308.2 Q583.6 311 584.6 303.6 Q585.4 297.6 587 300.6 Q588.6 304 589.4 308 Q590.6 311 592.2 304.8" fill="none" stroke="#f01020" stroke-width="1.3"/>
</svg></body></html>
